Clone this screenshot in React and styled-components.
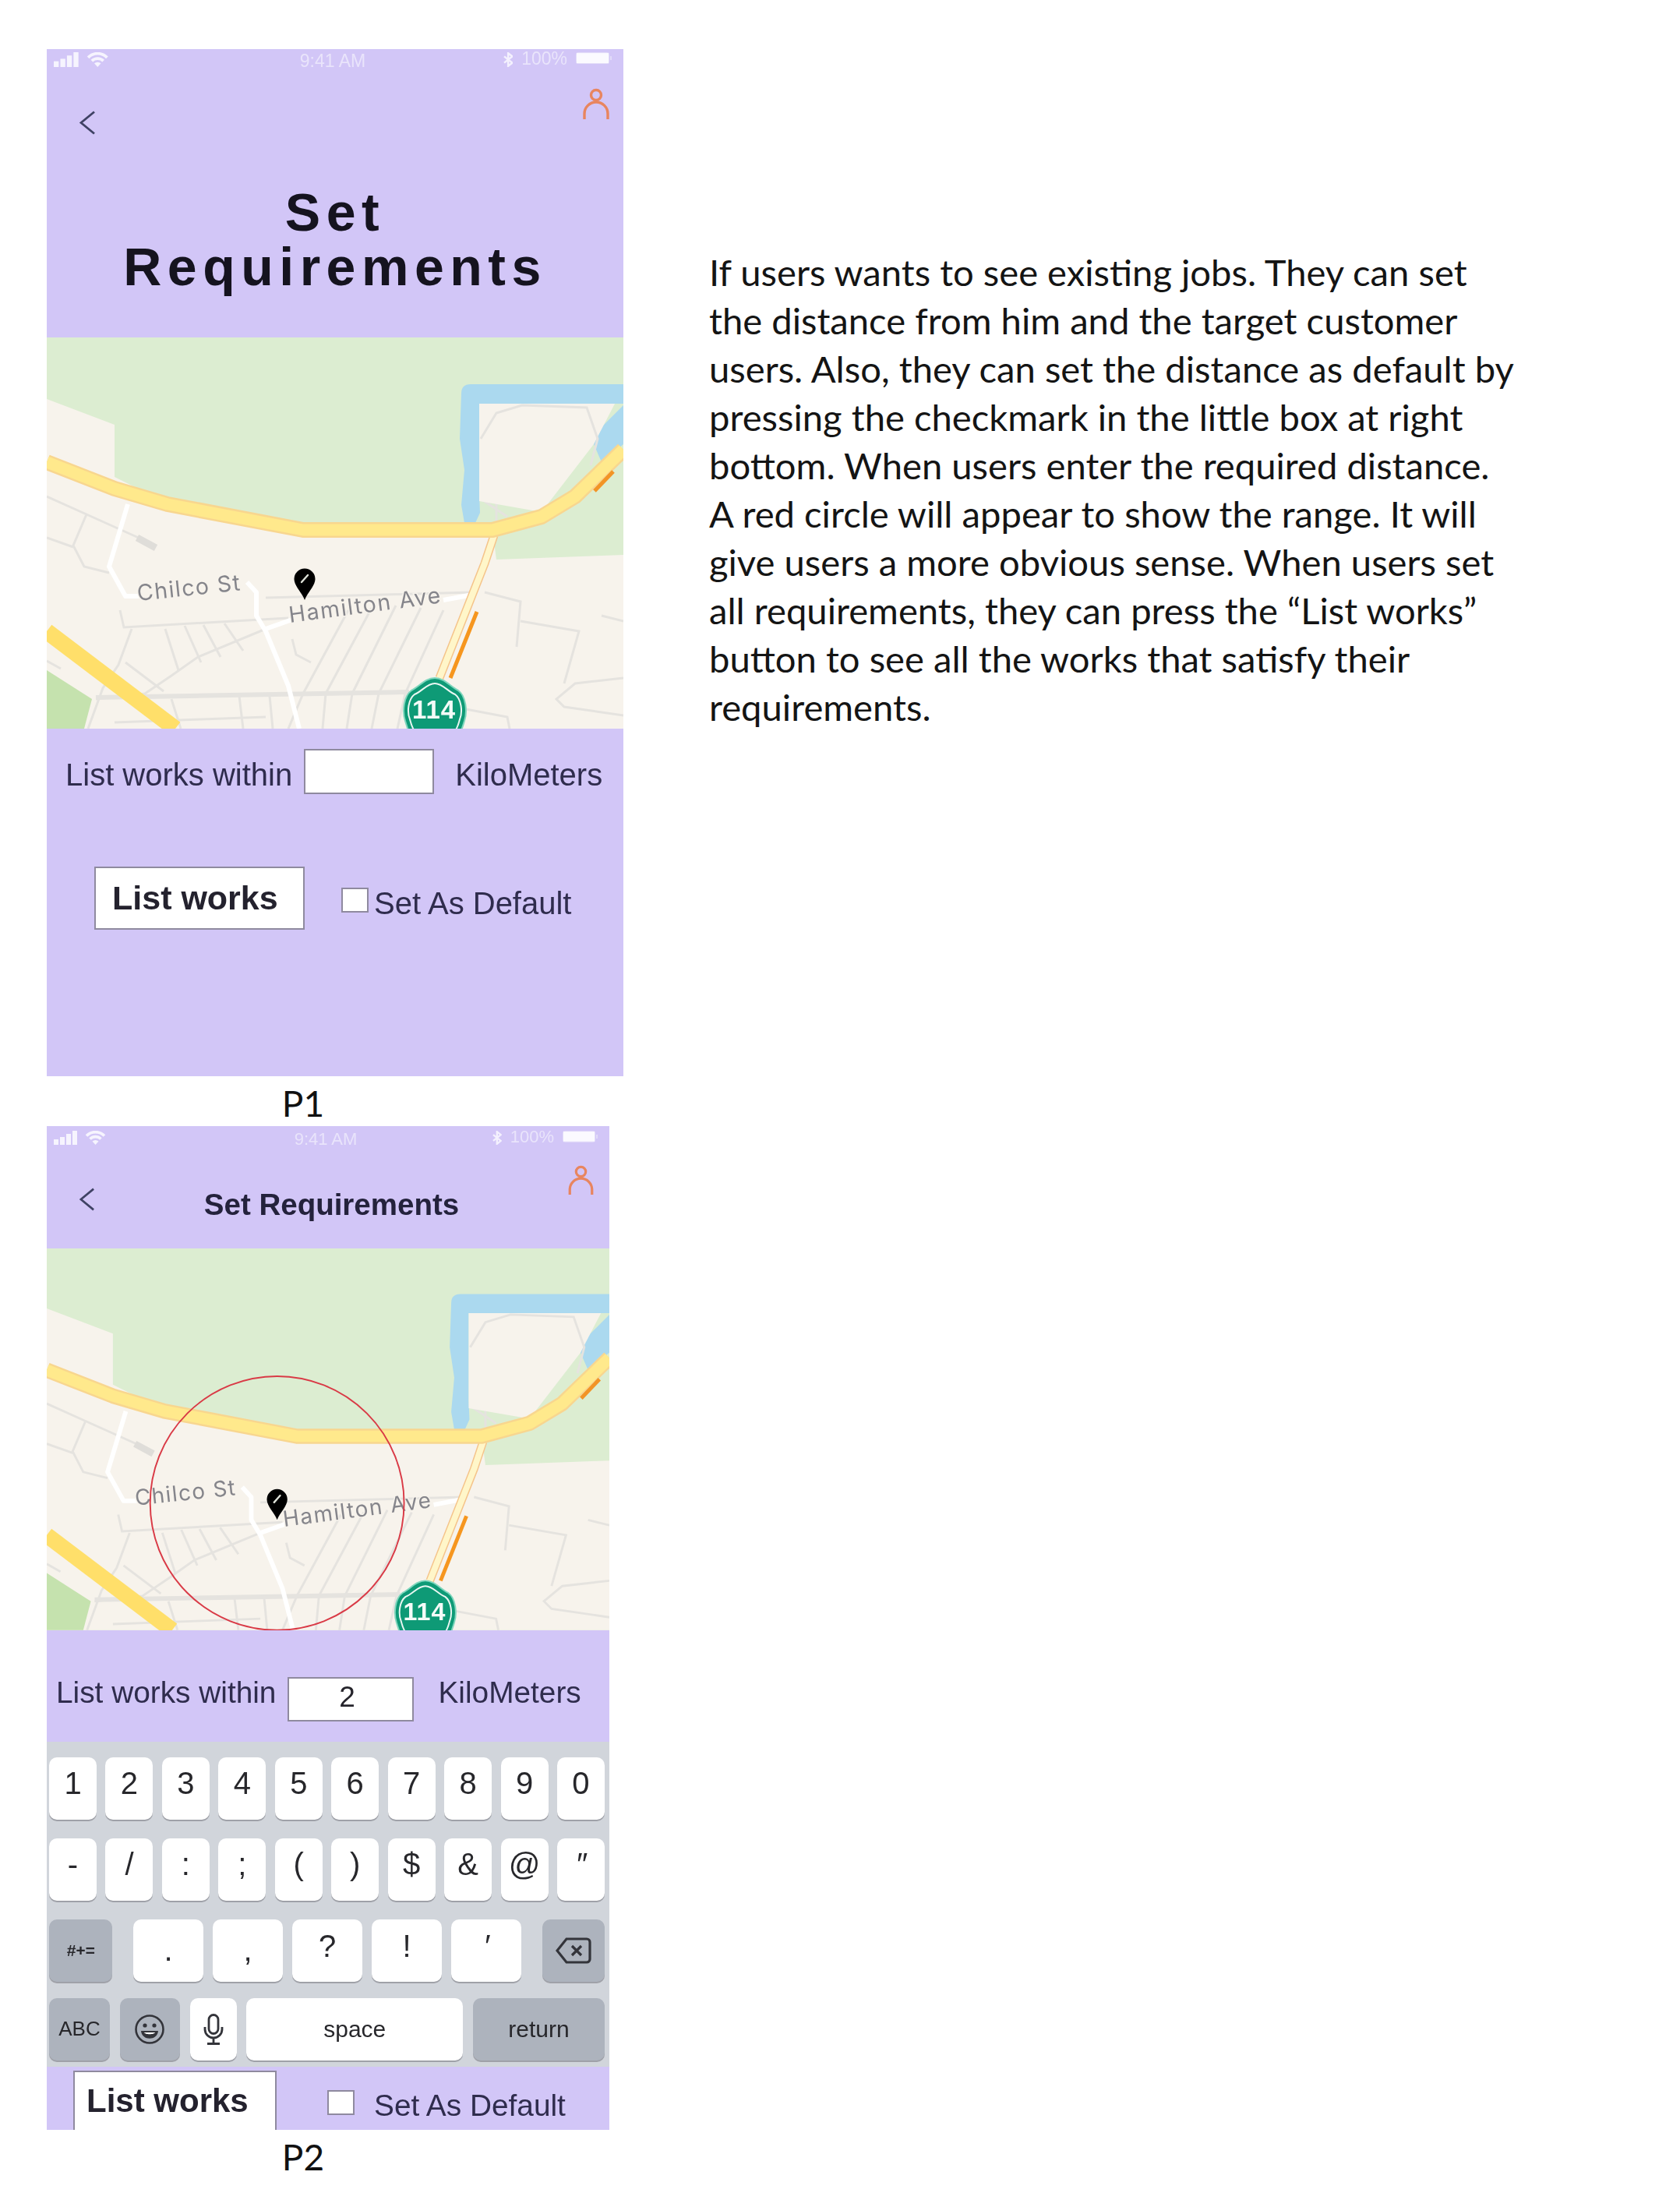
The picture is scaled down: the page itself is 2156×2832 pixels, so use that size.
import React from "react"
import styled, { createGlobalStyle } from "styled-components"

const ROW_ONE = ["1", "2", "3", "4", "5", "6", "7", "8", "9", "0"]
const ROW_TWO = ["-", "/", ":", ";", "(", ")", "$", "&", "@", "″"]
const ROW_THREE = [".", ",", "?", "!", "′"]

const STREETS = [
  "0,204 51,227 140,267",
  "51,227 34,267 48,294 80,302",
  "0,257 34,269",
  "94,350 99,372 310,360",
  "281,334 547,327",
  "310,502 329,457 387,350",
  "354,502 358,457 417,347",
  "385,502 392,457 448,344",
  "417,502 426,457 480,347",
  "450,502 460,457 509,350",
  "109,374 92,420 72,450 53,502",
  "152,374 169,427",
  "177,370 198,417",
  "201,369 223,410",
  "228,367 252,402",
  "281,374 194,410 160,434 126,457 63,464",
  "101,417 150,454",
  "0,415 18,425",
  "160,464 172,502",
  "247,460 252,502",
  "286,460 290,502",
  "87,494 281,487",
  "562,327 608,339 603,397",
  "608,364 683,377 664,444",
  "712,357 740,364",
  "740,437 678,444 654,464 664,474 740,485",
  "538,477 591,487 594,502",
  "557,207 591,230",
  "577,210 577,240",
  "315,387 320,407 339,417",
]

const Signal = ({ h }) => (
  <svg width={h * 1.78} height={h} viewBox="0 0 32 18">
    <rect x="0" y="11" width="6" height="7" fill="#f6f4fe" />
    <rect x="8" y="8" width="6" height="10" fill="#f6f4fe" />
    <rect x="16" y="4" width="6" height="14" fill="#f6f4fe" />
    <rect x="24" y="0" width="6" height="18" fill="#f6f4fe" />
  </svg>
)

const Wifi = ({ h }) => (
  <svg width={h * 1.5} height={h} viewBox="0 0 27 18" fill="none" stroke="#f6f4fe" strokeWidth="3.6">
    <path d="M2 6.500a16 16 0 0 1 23 0" />
    <path d="M6.500 10.500a10 10 0 0 1 14 0" />
    <path d="M13.500 18l-4-4.500a6 6 0 0 1 8 0z" fill="#f6f4fe" stroke="none" />
  </svg>
)

const Bluetooth = ({ h }) => (
  <svg width={h * 0.65} height={h} viewBox="0 0 12 18" fill="none" stroke="#f4f1fe" strokeWidth="2.400">
    <path d="M1 5l10 8-5 4V1l5 4-10 8" />
  </svg>
)

const Battery = ({ w }) => (
  <svg width={w} height={w * 0.33} viewBox="0 0 46 15">
    <rect x="0.500" y="0.500" width="42" height="14" rx="2" fill="none" stroke="#e2dcf8" />
    <rect x="1" y="1" width="41" height="13" fill="#fbfaff" />
    <rect x="44" y="5" width="2" height="5" fill="#e2dcf8" />
  </svg>
)

const BackIcon = ({ w, h }) => (
  <svg width={w} height={h} viewBox="0 0 22 31" fill="none" stroke="#3f4264" strokeWidth="2.800">
    <path d="M20 1.500L3 15.500l17 14" />
  </svg>
)

const PersonIcon = ({ w, h }) => (
  <svg width={w} height={h} viewBox="0 0 34 40" fill="none" stroke="#e8855f" strokeWidth="3.400">
    <circle cx="17" cy="9" r="6.500" />
    <path d="M2 40V33a15 15 0 0 1 30 0v7" />
  </svg>
)

const Pin = ({ x, y }) => (
  <g transform={`translate(${x} ${y})`}>
    <path d="M0 40C-3 31-13.500 22-13.500 13a13.500 13.500 0 0 1 27 0C13.500 22 3 31 0 40z" fill="#000" />
    <path d="M-4 17L4 8" stroke="#dfe3da" strokeWidth="2.400" strokeLinecap="round" />
  </g>
)

const MapView = ({ pinX, pinY, range }) => (
  <MapImage viewBox="0 0 740 502">
    <rect width="740" height="502" fill="#dcedd1" />
    <path d="M0 79L87 112V179L157 214 329 247H572L577 285 740 279V502H0z" fill="#f7f3ec" />
    <path d="M0 427L58 464 48 502H0z" fill="#c5e2ae" />
    {STREETS.map(points => (
      <Street key={points} points={points} />
    ))}
    <path d="M63 462L465 455" stroke="#e5e3df" strokeWidth="6" fill="none" />
    <path d="M116 257L140 270" stroke="#dfddd9" strokeWidth="9" fill="none" />
    <path d="M544 60H740V85H555V200L556 225 550 238H536L532 215 536 170 530 130 532 72Q532 60 544 60z" fill="#abd9ef" />
    <path d="M740 87L707 120 702 137 712 160 740 137z" fill="#abd9ef" />
    <path d="M555 85H729L702 137 635 224 555 210z" fill="#f7f3ec" />
    <path d="M557 130L577 97 610 87 693 90 707 130 698 164" stroke="#e5e3df" strokeWidth="3" fill="none" />
    <Road points="104,214 80,294 101,332 120,332" />
    <Road points="257,314 269,327 269,357 281,377 310,447 324,502" />
    <Road points="281,374 315,362" />
    <Road points="509,337 547,330" />
    <Highway points="574,254 562,290 504,437" stroke="#f5c48a" strokeWidth="11" />
    <Highway points="574,254 562,290 504,437" stroke="#fff6c9" strokeWidth="8" />
    <Highway points="552,352 518,437" stroke="#f6961f" strokeWidth="5" />
    <Highway points="0,160 87,194 155,214 329,247 572,247 635,230 678,204 740,144" stroke="#f8d68f" strokeWidth="20" />
    <Highway points="0,160 87,194 155,214 329,247 572,247 635,230 678,204 740,144" stroke="#ffe98c" strokeWidth="15" />
    <Highway points="727,172 703,197" stroke="#f29426" strokeWidth="5" />
    <Highway points="0,377 165,502" stroke="#ffdf6a" strokeWidth="21" />
    <MapLabel x="117" y="338" transform="rotate(-6 117 338)" letterSpacing="1.500">
      Chilco St
    </MapLabel>
    <MapLabel x="312" y="366" transform="rotate(-7.500 312 366)" letterSpacing="1.700">
      Hamilton Ave
    </MapLabel>
    <Pin x={pinX} y={pinY} />
    <path d="M498 437C510 437 518 448 528 453 538 460 540 480 536 492 533 502 530 510 528 512H468C466 510 463 502 460 492 456 480 458 460 468 453 478 448 486 437 498 437z" fill="#0e9a76" stroke="#7fd6bd" strokeWidth="2" />
    <path d="M498 444C508 444 514 454 524 458 532 464 534 480 530 490 528 498 525 504 523 506H473C471 504 468 498 466 490 462 480 464 464 472 458 482 454 488 444 498 444z" fill="none" stroke="#e9f7f2" strokeWidth="2" />
    <ShieldNumber x="497" y="489" textAnchor="middle">
      114
    </ShieldNumber>
    {range && <circle cx={range.x} cy={range.y} r={range.r} fill="none" stroke="#d93a46" strokeWidth="2" />}
  </MapImage>
)

const Keyboard = () => (
  <Keys>
    <KeyRow>
      {ROW_ONE.map(k => (
        <Key key={k} $w={61} $raise={12}>
          {k}
        </Key>
      ))}
    </KeyRow>
    <KeyRow>
      {ROW_TWO.map(k => (
        <Key key={k} $w={61} $raise={12} $slant={k === "″"}>
          {k}
        </Key>
      ))}
    </KeyRow>
    <KeyRow>
      <Key $w={81} $dark $size={21}>
        <b>
          <i>#+=</i>
        </b>
      </Key>
      <PunctuationKeys>
        {ROW_THREE.map(k => (
          <Key key={k} $w={90} $raise={k === "?" || k === "!" || k === "′" ? 10 : 0} $slant={k === "′"}>
            {k}
          </Key>
        ))}
      </PunctuationKeys>
      <Key $w={80} $dark>
        <svg width="46" height="34" viewBox="0 0 46 34" fill="none" stroke="#33343a" strokeWidth="3.200">
          <path d="M14 2H40a4 4 0 0 1 4 4V28a4 4 0 0 1-4 4H14L2 17z" />
          <path d="M21 11L33 23M33 11L21 23" />
        </svg>
      </Key>
    </KeyRow>
    <LastKeyRow>
      <Key $w={78} $dark $size={26}>
        ABC
      </Key>
      <Key $w={77} $dark>
        <svg width="40" height="40" viewBox="0 0 40 40" fill="none" stroke="#33343a" strokeWidth="2.600">
          <circle cx="20" cy="20" r="17.500" />
          <circle cx="14" cy="15" r="2.600" fill="#33343a" stroke="none" />
          <circle cx="26" cy="15" r="2.600" fill="#33343a" stroke="none" />
          <path d="M9 22H31C30 35 10 35 9 22z" fill="#33343a" stroke="none" />
          <path d="M13 24H27C26 27 14 27 13 24z" fill="#fff" stroke="none" />
        </svg>
      </Key>
      <Key $w={60}>
        <svg width="26" height="40" viewBox="0 0 26 40" fill="none" stroke="#33343a" strokeWidth="2.800">
          <rect x="7" y="1.500" width="12" height="24" rx="6" />
          <path d="M2 17V20a11 11 0 0 0 22 0V17M13 31V38M5 38.500H21" />
        </svg>
      </Key>
      <Key $w={278} $size={30}>
        space
      </Key>
      <Key $w={169} $dark $size={30}>
        return
      </Key>
    </LastKeyRow>
  </Keys>
)

const App = () => (
  <Page>
    <GlobalStyle />
    <Screens>
      <Phone $w={740}>
        <Header $h={370}>
          <StatusBar $size={23}>
            <StatusLeft>
              <Signal h={19} />
              <Wifi h={19} />
            </StatusLeft>
            <span>9:41 AM</span>
            <StatusRight>
              <Bluetooth h={19} />
              <Percent>100%</Percent>
              <Battery w={46} />
            </StatusRight>
          </StatusBar>
          <Nav $right={18}>
            <NavBack $top={29}>
              <BackIcon w={22} h={31} />
            </NavBack>
            <PersonIcon w={34} h={40} />
          </Nav>
          <BigTitle>
            <span>Set</span>
            <span>Requirements</span>
          </BigTitle>
        </Header>
        <MapView pinX={331} pinY={297} />
        <Body $h={446}>
          <WithinRow $left={24} $top={26} $bottom={93}>
            <RowLabel $size={40} $top={13}>
              List works within
            </RowLabel>
            <Distance $w={167} $h={58} $left={15} />
            <RowLabel $size={40} $top={13} $left={27}>
              KiloMeters
            </RowLabel>
          </WithinRow>
          <ActionRow $left={61}>
            <ListButton $w={270} $h={81} $size={43} $pad={21}>
              List works
            </ListButton>
            <Check $left={47} $top={27} />
            <RowLabel $size={40} $top={27} $left={7}>
              Set As Default
            </RowLabel>
          </ActionRow>
        </Body>
      </Phone>
      <Caption>P1</Caption>
      <Phone $w={722}>
        <Header $h={157}>
          <StatusBar $size={22} $small>
            <StatusLeft>
              <Signal h={18} />
              <Wifi h={18} />
            </StatusLeft>
            <span>9:41 AM</span>
            <StatusRight>
              <Bluetooth h={18} />
              <Percent>100%</Percent>
              <Battery w={45} />
            </StatusRight>
          </StatusBar>
          <Nav $right={20}>
            <NavBack $top={29}>
              <BackIcon w={21} h={30} />
            </NavBack>
            <SmallTitle>Set Requirements</SmallTitle>
            <PersonIcon w={33} h={38} />
          </Nav>
        </Header>
        <MapView pinX={303} pinY={317} range={{ x: 303, y: 335, r: 167 }} />
        <Body $h={143}>
          <WithinRow $left={12} $top={60}>
            <RowLabel $size={38.800} $top={1}>
              List works within
            </RowLabel>
            <Distance $w={162} $h={57} $left={15} $raise>
              2
            </Distance>
            <RowLabel $size={38.800} $top={1} $left={31}>
              KiloMeters
            </RowLabel>
          </WithinRow>
        </Body>
        <Keyboard />
        <Body $h={81}>
          <ActionRow $left={34}>
            <ListButton $w={261} $h={90} $size={42} $pad={15} $open>
              List works
            </ListButton>
            <Check $left={65} $top={30} />
            <RowLabel $size={38.800} $top={31} $left={25}>
              Set As Default
            </RowLabel>
          </ActionRow>
        </Body>
      </Phone>
      <Caption>P2</Caption>
    </Screens>
    <Notes>
      If users wants to see existing jobs. They can set
      <br />
      the distance from him and the target customer
      <br />
      users. Also, they can set the distance as default by
      <br />
      pressing the checkmark in the little box at right
      <br />
      bottom. When users enter the required distance.
      <br />
      A red circle will appear to show the range. It will
      <br />
      give users a more obvious sense. When users set
      <br />
      all requirements, they can press the “List works”
      <br />
      button to see all the works that satisfy their
      <br />
      requirements.
    </Notes>
  </Page>
)

export default App

const GlobalStyle = createGlobalStyle`
  html, body {
    margin: 0;
    padding: 0;
    background: #fff;
  }
`

const Page = styled.div`
  width: 2156px;
  height: 2832px;
  display: flex;
  overflow: hidden;
  font-family: "Liberation Sans", Arial, sans-serif;
`

const Screens = styled.div`
  width: 910px;
  flex-shrink: 0;
  padding: 63px 0 0 60px;
  box-sizing: border-box;
`

const Phone = styled.div`
  width: ${props => props.$w}px;
  background: #d2c6f7;
  filter: blur(0.6px);
`

const Header = styled.header`
  height: ${props => props.$h}px;
  overflow: hidden;
`

const StatusBar = styled.div`
  height: 30px;
  box-sizing: border-box;
  padding: ${props => (props.$small ? "6px 15px 0 9px" : "4px 15px 0 9px")};
  display: grid;
  grid-template-columns: 1fr auto 1fr;
  font-size: ${props => props.$size}px;
  line-height: 1;
  color: #e9e4fb;
`

const StatusLeft = styled.div`
  display: flex;
  align-items: flex-start;
  gap: 8px;
`

const StatusRight = styled.div`
  display: flex;
  align-items: flex-start;
  justify-content: flex-end;
  gap: 11px;
`

const Percent = styled.span`
  margin-top: -3px;
`

const Nav = styled.div`
  padding: 20px ${props => props.$right}px 0 41px;
  display: flex;
  justify-content: space-between;
  align-items: flex-start;
`

const NavBack = styled.div`
  margin-top: ${props => props.$top}px;
`

const BigTitle = styled.h1`
  margin: 60px 0 0;
  display: flex;
  flex-direction: column;
  align-items: center;
  font-size: 68px;
  line-height: 70px;
  font-weight: 700;
  letter-spacing: 7.500px;
  color: #15131f;
`

const SmallTitle = styled.h2`
  margin: 32px 0 0;
  font-size: 38.500px;
  line-height: 1;
  font-weight: 700;
  color: #24223c;
`

const MapImage = styled.svg`
  display: block;
  width: 100%;
`

const Street = styled.polyline`
  fill: none;
  stroke: #e5e3df;
  stroke-width: 3;
`

const Road = styled.polyline`
  fill: none;
  stroke: #fff;
  stroke-width: 6;
  stroke-linejoin: round;
`

const Highway = styled.polyline`
  fill: none;
  stroke-linejoin: round;
`

const MapLabel = styled.text`
  font-family: "Inter", "Liberation Sans", sans-serif;
  font-size: 28.500px;
  fill: #85858b;
  stroke: #f7f3ec;
  stroke-width: 3px;
  paint-order: stroke;
`

const ShieldNumber = styled.text`
  font-family: "Liberation Sans", sans-serif;
  font-size: 33px;
  font-weight: 700;
  letter-spacing: 1px;
  fill: #f4fbf8;
`

const Body = styled.div`
  height: ${props => props.$h}px;
  overflow: hidden;
`

const WithinRow = styled.div`
  display: flex;
  align-items: flex-start;
  padding: ${props => props.$top}px 0 0 ${props => props.$left}px;
  margin-bottom: ${props => props.$bottom || 0}px;
`

const RowLabel = styled.span`
  margin: ${props => props.$top}px 0 0 ${props => props.$left || 0}px;
  font-size: ${props => props.$size}px;
  line-height: 1;
  white-space: nowrap;
  color: #2f2c4d;
`

const Distance = styled.div`
  width: ${props => props.$w}px;
  height: ${props => props.$h}px;
  margin-left: ${props => props.$left}px;
  box-sizing: border-box;
  padding: 0 10px ${props => (props.$raise ? 4 : 0)}px 0;
  display: flex;
  align-items: center;
  justify-content: center;
  background: #fff;
  border: 2px solid #8f8a9f;
  font-size: 37px;
  color: #26252c;
`

const ActionRow = styled.div`
  display: flex;
  align-items: flex-start;
  padding-left: ${props => props.$left}px;
`

const ListButton = styled.div`
  width: ${props => props.$w}px;
  height: ${props => props.$h}px;
  box-sizing: border-box;
  padding-left: ${props => props.$pad}px;
  display: flex;
  align-items: ${props => (props.$open ? "flex-start" : "center")};
  background: #fff;
  border: 2px solid #8f8a9f;
  ${props => props.$open && "margin-top: 5px; padding-top: 16px; line-height: 1;"}
  font-size: ${props => props.$size}px;
  font-weight: 700;
  color: #24222e;
`

const Check = styled.div`
  width: 35px;
  height: 32px;
  margin: ${props => props.$top}px 0 0 ${props => props.$left}px;
  box-sizing: border-box;
  background: #fff;
  border: 2px solid #8f8a9f;
`

const Keys = styled.div`
  height: 417px;
  box-sizing: border-box;
  padding: 20px 6px 0 3px;
  display: flex;
  flex-direction: column;
  gap: 24px;
  background: #d1d5db;
`

const KeyRow = styled.div`
  display: flex;
  justify-content: space-between;
`

const LastKeyRow = styled(KeyRow)`
  margin-top: -3px;
`

const PunctuationKeys = styled.div`
  display: flex;
  gap: 12px;
`

const Key = styled.div`
  width: ${props => props.$w}px;
  height: 80px;
  box-sizing: border-box;
  padding-bottom: ${props => props.$raise || 0}px;
  flex-shrink: 0;
  display: flex;
  align-items: center;
  justify-content: center;
  border-radius: 10px;
  background: ${props => (props.$dark ? "#adb3bd" : "#fff")};
  box-shadow: 0 2px 0 #9fa1a8;
  font-size: ${props => props.$size || 40}px;
  font-style: ${props => (props.$slant ? "italic" : "normal")};
  color: #27272b;
`

const Caption = styled.div`
  width: 658px;
  height: 64px;
  text-align: center;
  font-family: "Lato", sans-serif;
  font-size: 46px;
  line-height: 69px;
  color: #111;
`

const Notes = styled.p`
  margin: 318px 0 0;
  font-family: "Lato", sans-serif;
  font-size: 47.200px;
  line-height: 62px;
  white-space: nowrap;
  color: #141414;
`
